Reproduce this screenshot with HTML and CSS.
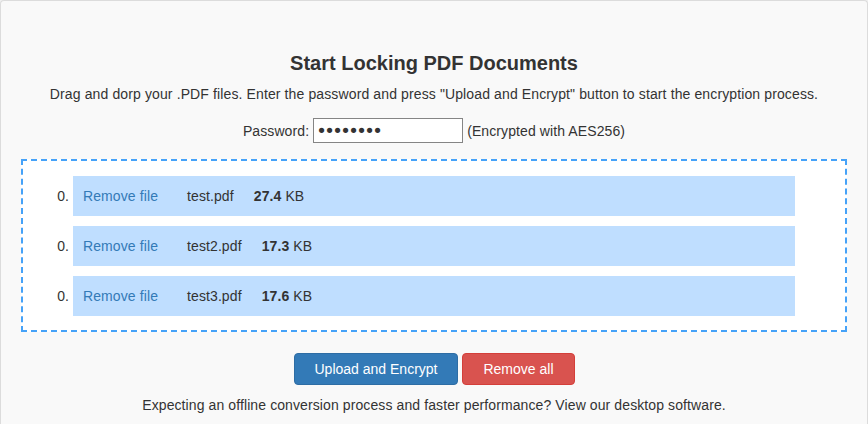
FILE: index.html
```html
<!doctype html>
<html lang="en">
<head>
  <title>Lock PDF</title>
  <meta charset="utf-8">
  <link rel="stylesheet" href="styles.css">
</head>
<body>
<div class="panel">
  <h3 class="title">Start Locking PDF Documents</h3>
  <p class="intro">Drag and dorp your .PDF files. Enter the password and press "Upload and Encrypt" button to start the encryption process.</p>

  <div class="passwordRow">
    <label for="passwordInput">Password:</label>
    <input id="passwordInput" type="password" value="12345678">
    <span>(Encrypted with AES256)</span>
  </div>

  <div class="dropZone">
    <ol class="fileList">
      <li value="0">
        <a href="#" class="removeLink">Remove file</a>
        <span class="fileName">test.pdf</span>
        <span class="fileSize"><b>27.4</b> KB</span>
      </li>
      <li value="0">
        <a href="#" class="removeLink">Remove file</a>
        <span class="fileName">test2.pdf</span>
        <span class="fileSize"><b>17.3</b> KB</span>
      </li>
      <li value="0">
        <a href="#" class="removeLink">Remove file</a>
        <span class="fileName">test3.pdf</span>
        <span class="fileSize"><b>17.6</b> KB</span>
      </li>
    </ol>
  </div>

  <div class="actions">
    <button class="btn btnPrimary">Upload and Encrypt</button>
    <button class="btn btnDanger">Remove all</button>
  </div>

  <p class="footnote">Expecting an offline conversion process and faster performance? View our desktop software.</p>
</div>
</body>
</html>
```

FILE: styles.css
```css
html, body {
  margin: 0;
  background-color: #f0f0f0;
}

body {
  font-family: "Liberation Sans", Arial, sans-serif;
  font-size: 14px;
  line-height: 20px;
  letter-spacing: 0.1px;
  color: #333;
  overflow: hidden;
}

.panel {
  background-color: #f9f9f9;
  border: 1px solid #dcdcdc;
  border-bottom: none;
  border-radius: 4px 4px 0 0;
  padding-top: 51px;
  height: 430px;
  box-sizing: border-box;
  text-align: center;
}

.title {
  margin: 0;
  font-size: 20px;
  line-height: 22px;
  font-weight: bold;
  letter-spacing: 0;
}

.intro {
  margin: 10px 0 0;
  letter-spacing: 0.12px;
}

.passwordRow {
  margin-top: 14px;
  height: 25px;
  display: flex;
  justify-content: center;
  align-items: center;
}

.passwordRow label {
  margin-right: 4px;
}

.passwordRow input {
  width: 150px;
  height: 25px;
  box-sizing: border-box;
  margin: 0 4px 0 0;
  padding: 0 2px;
  border: 1px solid #858585;
  background-color: white;
  font-family: "DejaVu Sans", sans-serif;
  font-size: 18px;
  letter-spacing: -2.6px;
  color: #333;
}

.dropZone {
  margin: 16px 20px 0;
  border: 2px dashed #45a2f8;
  background-color: white;
}

.fileList {
  margin: 0;
  padding: 15px 50px 14px;
  text-align: left;
}

.fileList li {
  height: 40px;
  line-height: 40px;
  padding-left: 10px;
  margin-bottom: 10px;
  background-color: #bfdeff;
}

.fileList li:last-child {
  margin-bottom: 0;
}

.removeLink {
  color: #337ab7;
  text-decoration: none;
}

.fileName {
  margin-left: 25px;
}

.fileSize {
  margin-left: 16px;
}

.actions {
  margin-top: 21px;
}

.btn {
  font-family: "Liberation Sans", Arial, sans-serif;
  font-size: 14px;
  line-height: 20px;
  height: 32px;
  padding: 5px 20px;
  border: 1px solid transparent;
  border-radius: 4px;
  color: white;
  cursor: pointer;
}

.btnPrimary {
  background-color: #337ab7;
  border-color: #2e6da4;
}

.btnDanger {
  background-color: #d9534f;
  border-color: #d43f3a;
}

.footnote {
  margin: 10px 0 0;
}
```
